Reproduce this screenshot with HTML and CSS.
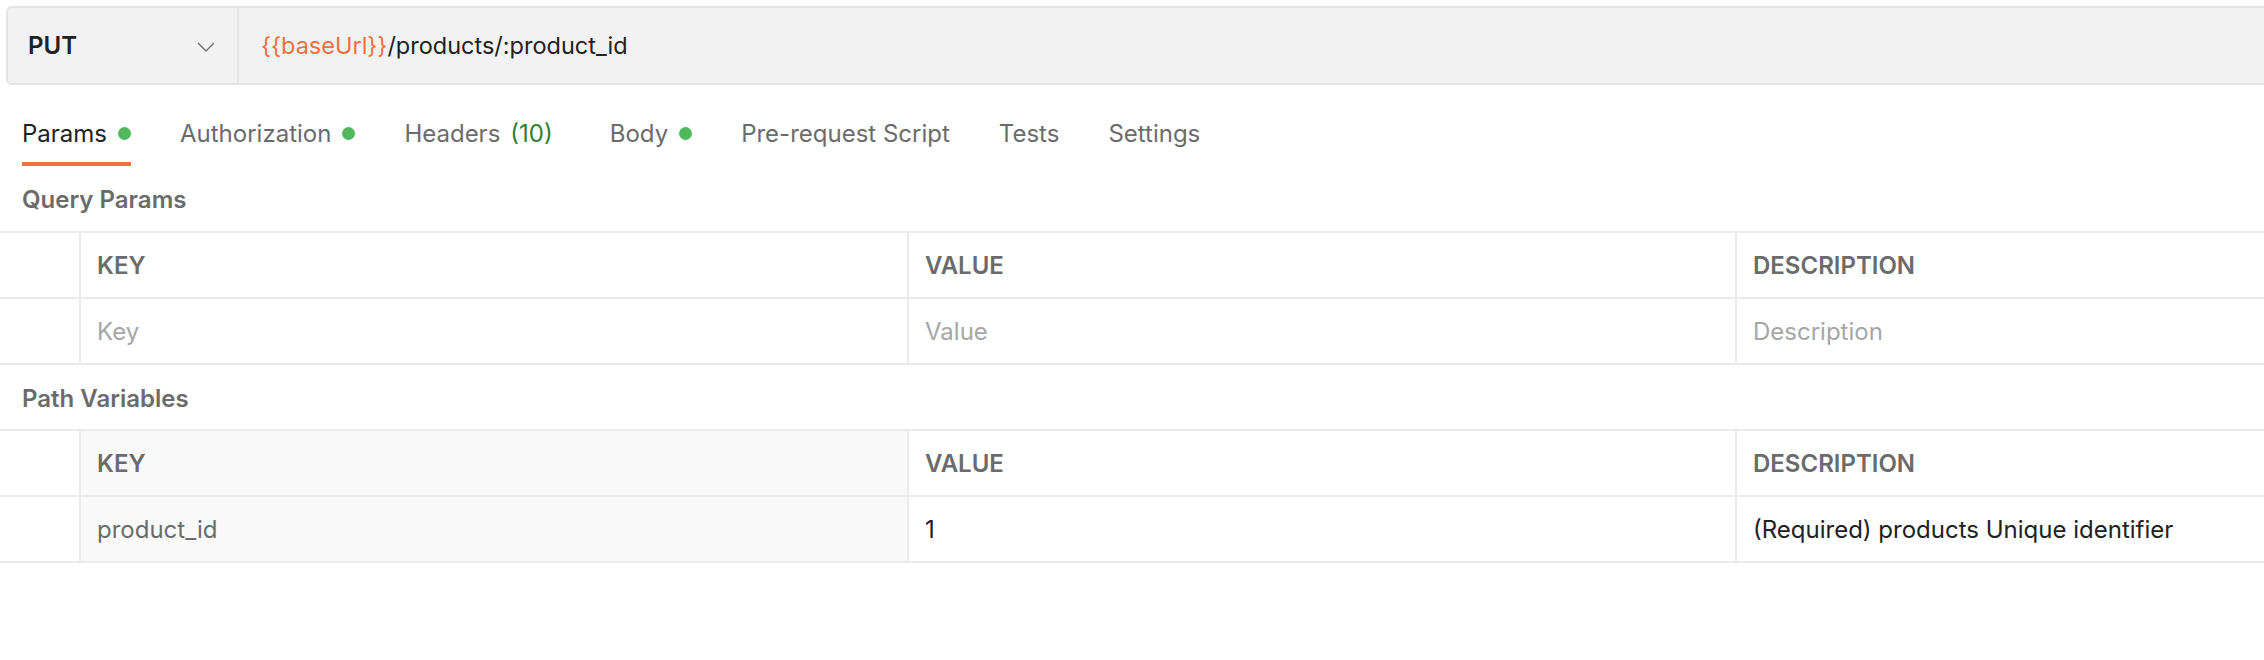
FILE: index.html
```html
<!DOCTYPE html>
<html>
<head>
<meta charset="utf-8">
<link rel="stylesheet" href="styles.css">
</head>
<body>
<div class="urlbar">
  <div class="method">
    <span class="method-name">PUT</span>
    <svg class="chevron" width="18" height="10" viewBox="0 0 18 10"><polyline points="1,1 9,9 17,1" fill="none" stroke="#707070" stroke-width="1.4"/></svg>
  </div>
  <div class="url"><span class="var">{{baseUrl}}</span>/products/:product_id</div>
</div>

<nav class="tabs">
  <div class="tab active">Params<span class="dot"></span></div>
  <div class="tab">Authorization<span class="dot"></span></div>
  <div class="tab">Headers<span class="count">(10)</span></div>
  <div class="tab">Body<span class="dot"></span></div>
  <div class="tab">Pre-request Script</div>
  <div class="tab">Tests</div>
  <div class="tab">Settings</div>
</nav>

<div class="section-label">Query Params</div>
<div class="table">
  <div class="row head">
    <div class="cell first"></div>
    <div class="cell">KEY</div>
    <div class="cell">VALUE</div>
    <div class="cell">DESCRIPTION</div>
  </div>
  <div class="row">
    <div class="cell first"></div>
    <div class="cell placeholder">Key</div>
    <div class="cell placeholder">Value</div>
    <div class="cell placeholder">Description</div>
  </div>
</div>

<div class="section-label next">Path Variables</div>
<div class="table">
  <div class="row head">
    <div class="cell first"></div>
    <div class="cell readonly">KEY</div>
    <div class="cell">VALUE</div>
    <div class="cell">DESCRIPTION</div>
  </div>
  <div class="row">
    <div class="cell first"></div>
    <div class="cell readonly keytext">product_id</div>
    <div class="cell value">1</div>
    <div class="cell value">(Required) products Unique identifier</div>
  </div>
</div>
</body>
</html>
```

FILE: styles.css
```css
* { box-sizing: border-box; }
html, body { margin: 0; padding: 0; background: #ffffff; }
body {
  font-family: Inter, "Noto Sans", "Liberation Sans", sans-serif;
  font-size: 24px;
  color: #212121;
  overflow: hidden;
}

.urlbar {
  display: flex;
  height: 79px;
  margin: 6px -20px 0 6px;
  background: #f2f2f2;
  border: 2px solid #e4e4e4;
  border-radius: 6px;
}
.method {
  width: 231px;
  flex: none;
  display: flex;
  align-items: center;
  justify-content: space-between;
  padding: 0 22px 0 20px;
  border-right: 2px solid #e4e4e4;
}
.method-name { font-weight: 600; color: #212121; }
.chevron { display: block; margin-top: 2px; }
.url {
  display: flex;
  align-items: center;
  padding-left: 22px;
  color: #212121;
  font-size: 23.5px;
}
.var { color: #f0703e; }

.tabs {
  display: flex;
  gap: 49px;
  padding: 0 0 0 22px;
  margin-top: 25px;
  height: 56px;
}
.tab {
  display: flex;
  align-items: center;
  height: 100%;
  color: #6b6b6b;
  padding-bottom: 6px;
  border-bottom: 4px solid transparent;
}
.tab.active { color: #212121; border-bottom-color: #f0733f; }
.dot {
  width: 13px;
  height: 13px;
  border-radius: 50%;
  background: #52b85e;
  margin-left: 11px;
}
.count { color: #2f8132; margin-left: 10px; margin-right: 8px; }

.section-label {
  height: 65px;
  display: flex;
  align-items: center;
  padding-left: 22px;
  font-weight: 600;
  color: #6b6b6b;
  padding-top: 2px;
}
.section-label.next { height: 64px; }

.table { border-top: 2px solid #ebebeb; }
.row {
  display: grid;
  grid-template-columns: 79px 828px 828px 1fr;
  height: 66px;
  border-bottom: 2px solid #ebebeb;
}
.cell {
  display: flex;
  align-items: center;
  padding-left: 16px;
  border-left: 2px solid #ebebeb;
  white-space: nowrap;
}
.cell.first { border-left: none; padding: 0; }
.head .cell { font-weight: 600; color: #6b6b6b; }
.placeholder { color: #a6a6a6; }
.readonly { background: #f9f9f9; }
.keytext { color: #6b6b6b; }
.value { color: #212121; }
```
